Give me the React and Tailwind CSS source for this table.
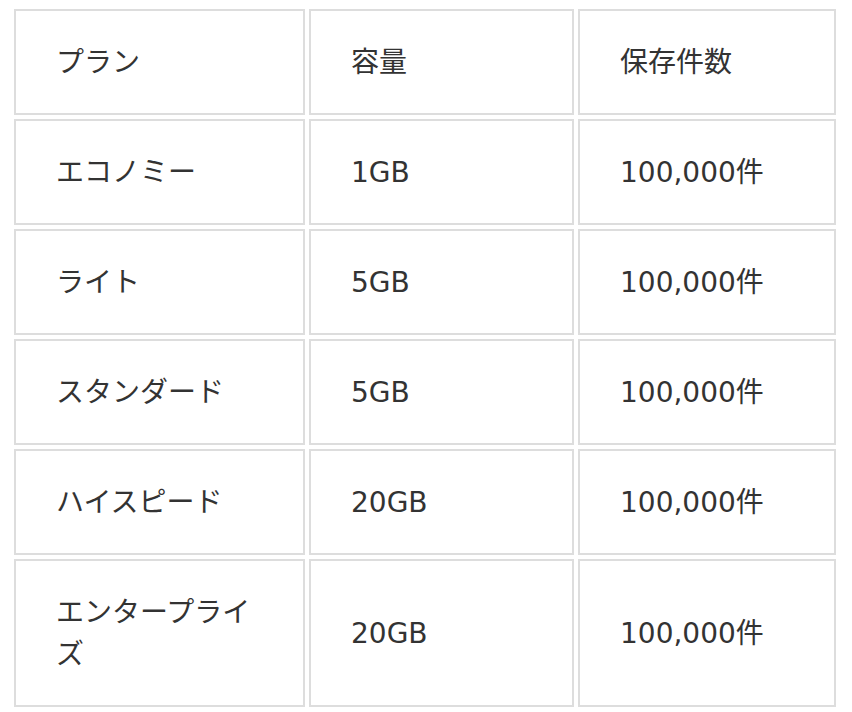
export default function App() {
  const rows = [
    ["エコノミー", "1GB", "100,000件"],
    ["ライト", "5GB", "100,000件"],
    ["スタンダード", "5GB", "100,000件"],
    ["ハイスピード", "20GB", "100,000件"],
    ["エンタープライズ", "20GB", "100,000件"],
  ];
  const cell =
    "border-2 border-[#dddddd] px-[40px] pt-[31px] pb-[29px] text-left align-middle font-normal";
  return (
    <div
      className="bg-white pt-[5px] pl-[10px] pb-[2px] text-[28px] leading-[42px] text-[#333333]"
      style={{ fontFamily: '"DejaVu Sans", "Noto Sans CJK JP", sans-serif' }}
    >
      <table className="w-[830px] table-fixed border-separate border-spacing-[4px]">
        <colgroup>
          <col className="w-[291px]" />
          <col className="w-[265px]" />
          <col className="w-[258px]" />
        </colgroup>
        <thead>
          <tr>
            <th className={cell}>プラン</th>
            <th className={cell}>容量</th>
            <th className={cell}>保存件数</th>
          </tr>
        </thead>
        <tbody>
          {rows.map((r) => (
            <tr key={r[0]}>
              <td className={cell}>{r[0]}</td>
              <td className={cell}>{r[1]}</td>
              <td className={cell}>{r[2]}</td>
            </tr>
          ))}
        </tbody>
      </table>
    </div>
  );
}
